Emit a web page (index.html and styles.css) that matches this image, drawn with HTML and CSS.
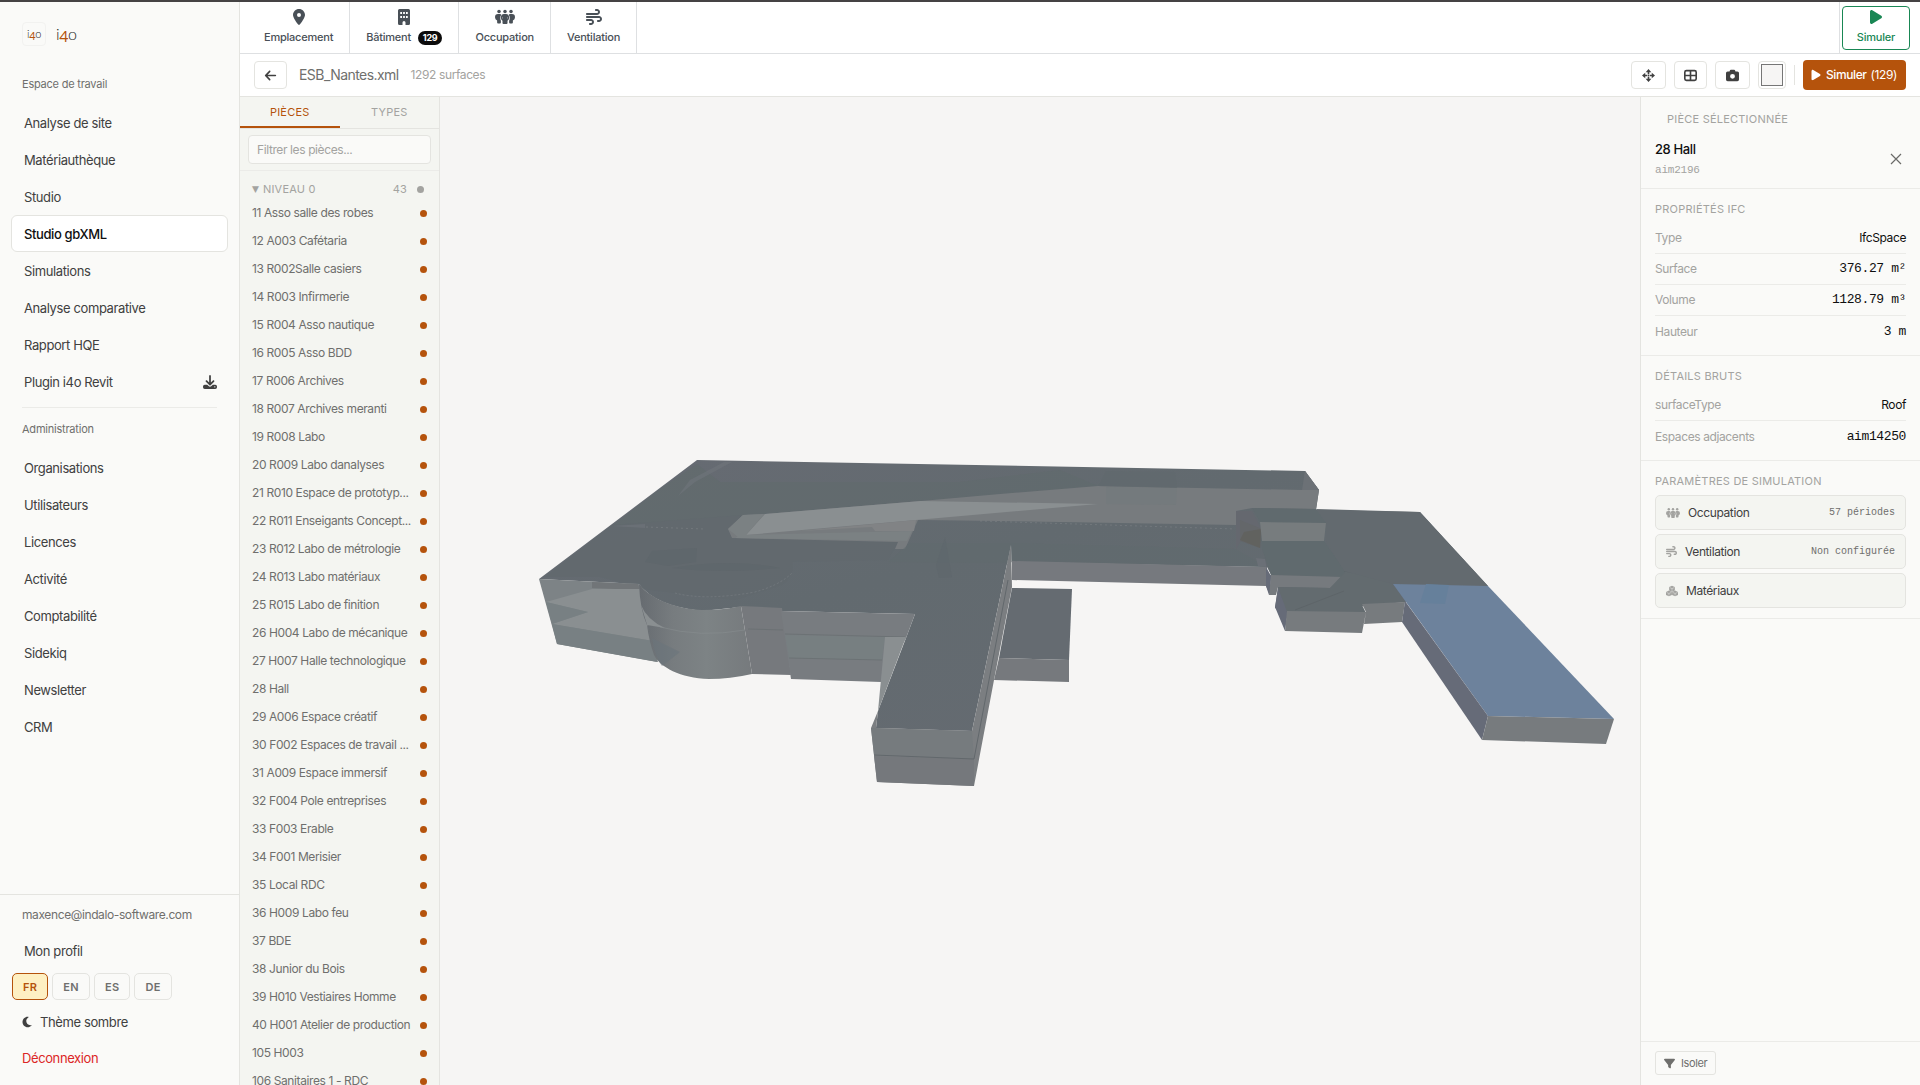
FILE: index.html
```html
<!DOCTYPE html>
<html lang="fr">
<head>
<meta charset="utf-8">
<meta name="viewport" content="width=device-width, initial-scale=1">
<title>Studio gbXML</title>
<link rel="stylesheet" href="styles.css">
</head>
<body>
<svg class="sprite" aria-hidden="true">
  <symbol id="pin" viewBox="0 0 384 512"><path d="M215.700 499.200C267 435 384 279.400 384 192C384 86 298 0 192 0S0 86 0 192c0 87.400 117 243 168.300 307.200c12.300 15.300 35.100 15.300 47.400 0zM192 128a64 64 0 1 1 0 128 64 64 0 1 1 0-128z"/></symbol>
  <symbol id="building" viewBox="0 0 384 512"><path fill-rule="evenodd" d="M48 0h288a48 48 0 0 1 48 48v416a48 48 0 0 1-48 48h-96v-80a48 48 0 0 0-96 0v80H48a48 48 0 0 1-48-48V48A48 48 0 0 1 48 0zM72 96v64h56V96zm92 0v64h56V96zm92 0v64h56V96zM72 224v64h56v-64zm92 0v64h56v-64zm92 0v64h56v-64z"/></symbol>
  <symbol id="people" viewBox="0 0 640 512"><circle cx="128" cy="80" r="56"/><circle cx="320" cy="80" r="56"/><circle cx="512" cy="80" r="56"/><path d="M96 160h64q26 0 42 22-34 44-34 106 0 46 20 84v60q0 32-30 32H98q-30 0-30-32v-64Q0 330 0 262 0 160 96 160zM544 160h-64q-26 0-42 22 34 44 34 106 0 46-20 84v60q0 32 30 32h60q30 0 30-32v-64q68-38 68-106 0-102-96-102z"/><path d="M288 160h64q100 0 100 122 0 56-52 96v70q0 32-30 32H270q-30 0-30-32v-70q-52-40-52-96 0-122 100-122zm-48 80q-26 38 0 84zm160 0v84q26-46 0-84z" fill-rule="evenodd"/></symbol>
  <symbol id="wind" viewBox="0 0 512 512"><path d="M288 32c0 17.700 14.300 32 32 32h32c17.700 0 32 14.300 32 32s-14.300 32-32 32H32c-17.700 0-32 14.300-32 32s14.300 32 32 32H352c53 0 96-43 96-96s-43-96-96-96H320c-17.700 0-32 14.300-32 32zm64 352c0 17.700 14.300 32 32 32h32c53 0 96-43 96-96s-43-96-96-96H32c-17.700 0-32 14.300-32 32s14.300 32 32 32H416c17.700 0 32 14.300 32 32s-14.300 32-32 32H384c-17.700 0-32 14.300-32 32zM128 512h32c53 0 96-43 96-96s-43-96-96-96H32c-17.700 0-32 14.300-32 32s14.300 32 32 32H160c17.700 0 32 14.300 32 32s-14.300 32-32 32H128c-17.700 0-32 14.300-32 32s14.300 32 32 32z"/></symbol>
  <symbol id="play" viewBox="0 0 384 512"><path d="M73 39c-14.800-9.100-33.400-9.400-48.500-.9S0 62.600 0 80V432c0 17.400 9.400 33.400 24.500 41.900s33.700 8.100 48.500-.9L361 297c14.300-8.700 23-24.200 23-41s-8.700-32.200-23-41L73 39z"/></symbol>
  <symbol id="moon" viewBox="0 0 384 512"><path d="M223.500 32C100 32 0 132.300 0 256S100 480 223.500 480c60.600 0 115.500-24.200 155.800-63.400c5-4.900 6.300-12.500 3.100-18.700s-10.100-9.700-17-8.500c-9.800 1.700-19.800 2.600-30.100 2.600c-96.900 0-175.500-78.800-175.500-176c0-65.800 36-123.100 89.300-153.300c6.100-3.500 9.200-10.500 7.700-17.300s-7.300-11.900-14.300-12.500c-6.300-.5-12.600-.8-19-.8z"/></symbol>
  <symbol id="back" viewBox="0 0 448 512"><path d="M9.400 233.400c-12.500 12.500-12.500 32.800 0 45.300l160 160c12.500 12.500 32.800 12.500 45.300 0s12.500-32.800 0-45.300L109.200 288 416 288c17.700 0 32-14.300 32-32s-14.300-32-32-32l-306.700 0L214.600 118.600c12.500-12.500 12.500-32.800 0-45.300s-32.800-12.500-45.300 0l-160 160z"/></symbol>
  <symbol id="filter" viewBox="0 0 512 512"><path d="M3.900 54.900C10.500 40.900 24.500 32 40 32H472c15.500 0 29.500 8.900 36.100 22.900s4.600 30.500-5.200 42.500L320 320.900V448c0 12.100-6.800 23.200-17.700 28.600s-23.800 4.300-33.500-3l-64-48c-8.100-6-12.800-15.500-12.800-25.600V320.900L9 97.300C-.7 85.400-2.800 68.800 3.900 54.900z"/></symbol>
  <symbol id="download" viewBox="0 0 512 512"><path fill-rule="evenodd" d="M288 32c0-42-64-42-64 0v243l-73-74c-30-30-75 15-46 46l128 128q23 20 46 0l128-128c29-31-16-76-46-46l-73 74zM64 352h90l52 52q50 44 100 0l52-52h90a64 64 0 0 1 64 64v32a64 64 0 0 1-64 64H64a64 64 0 0 1-64-64v-32a64 64 0 0 1 64-64zm368 56a24 24 0 1 0 0 48 24 24 0 0 0 0-48z"/></symbol>
  <symbol id="arrows" viewBox="0 0 16 16"><path d="M8 0l3.500 4H9v2.500H7V4H4.500zM8 16l3.500-4H9V9.500H7V12H4.500zM0 8l4-3.500V7h2.500v2H4v2.500zM16 8l-4-3.500V7H9.500v2H12v2.500zM7.200 7.200h1.600v1.600H7.200z"/></symbol>
  <symbol id="grid" viewBox="0 0 16 16"><path fill="none" stroke="currentColor" stroke-width="2" d="M3 2h10a2 2 0 0 1 2 2v8a2 2 0 0 1-2 2H3a2 2 0 0 1-2-2V4a2 2 0 0 1 2-2zM8 2v12M1 8h14"/></symbol>
  <symbol id="camera" viewBox="0 0 512 512"><path fill-rule="evenodd" d="M149 65l-10 31H64a64 64 0 0 0-64 64v256a64 64 0 0 0 64 64h384a64 64 0 0 0 64-64V160a64 64 0 0 0-64-64h-75l-10-31q-11-33-46-33H195q-35 0-46 33zM256 192a96 96 0 1 1 0 192 96 96 0 0 1 0-192z"/></symbol>
  <symbol id="cubes" viewBox="0 0 16 14"><path d="M8 0l3.800 1.800v4.400L8 8 4.200 6.200V1.800z"/><path d="M3.900 6.300l4 2v4l-4 1.700L0 12.300v-4zM12.100 6.300l3.900 2v4L12.100 14l-4-1.700v-4z"/><path d="M5 2.500L8 3.800l3-1.300M8 3.800v3M.8 9l3.100 1.300L7 9M3.900 10.300V13M9 9l3.100 1.300L15.200 9M12.100 10.300V13" fill="none" stroke="#f4f5f1" stroke-width=".6"/></symbol>
  <symbol id="close" viewBox="0 0 12 12"><path fill="none" stroke="currentColor" stroke-width="1.200" d="M1 1l10 10M11 1L1 11"/></symbol>
</svg>
<div class="app">
  <aside class="sidebar">
    <a class="brand" href="#"><span class="brand-mark">i<b>4</b>o</span><span class="brand-name">i<b>4</b>o</span></a>
    <h2 class="nav-title">Espace de travail</h2>
    <nav class="nav">
      <a href="#">Analyse de site</a>
      <a href="#">Matériauthèque</a>
      <a href="#">Studio</a>
      <a href="#" class="active">Studio gbXML</a>
      <a href="#">Simulations</a>
      <a href="#">Analyse comparative</a>
      <a href="#">Rapport HQE</a>
      <a href="#">Plugin i4o Revit <svg class="ico14"><use href="#download"/></svg></a>
    </nav>
    <h2 class="nav-title second">Administration</h2>
    <nav class="nav">
      <a href="#">Organisations</a>
      <a href="#">Utilisateurs</a>
      <a href="#">Licences</a>
      <a href="#">Activité</a>
      <a href="#">Comptabilité</a>
      <a href="#">Sidekiq</a>
      <a href="#">Newsletter</a>
      <a href="#">CRM</a>
    </nav>
    <div class="account">
      <p class="email">maxence@indalo-software.com</p>
      <a class="profile" href="#">Mon profil</a>
      <div class="langs"><button class="on">FR</button><button>EN</button><button>ES</button><button>DE</button></div>
      <button class="theme"><svg class="ico12"><use href="#moon"/></svg>Thème sombre</button>
      <button class="logout">Déconnexion</button>
    </div>
  </aside>
  <div class="main">
    <header class="ribbon">
      <button><svg class="ico16"><use href="#pin"/></svg><span>Emplacement</span></button>
      <button><svg class="ico16"><use href="#building"/></svg><span>Bâtiment <em>129</em></span></button>
      <button><svg class="ico20"><use href="#people"/></svg><span>Occupation</span></button>
      <button><svg class="ico16"><use href="#wind"/></svg><span>Ventilation</span></button>
      <div class="run"><button><svg class="ico16"><use href="#play"/></svg><span>Simuler</span></button></div>
    </header>
    <div class="toolbar">
      <button class="tool back" aria-label="Retour"><svg class="ico13"><use href="#back"/></svg></button>
      <h1>ESB_Nantes.xml</h1>
      <span class="count">1292 surfaces</span>
      <div class="tools">
        <button class="tool" aria-label="Recentrer"><svg class="ico13"><use href="#arrows"/></svg></button>
        <button class="tool narrow" aria-label="Grille"><svg class="ico13"><use href="#grid"/></svg></button>
        <button class="tool" aria-label="Capture"><svg class="ico13"><use href="#camera"/></svg></button>
        <input class="swatch" type="color" value="#f6f5f4" aria-label="Couleur de fond">
        <i class="sep"></i>
        <button class="simulate"><svg class="ico12"><use href="#play"/></svg>Simuler <span>(129)</span></button>
      </div>
    </div>
    <div class="work">
      <section class="rooms">
        <div class="tabs"><button class="on">PIÈCES</button><button>TYPES</button></div>
        <div class="search"><input type="text" placeholder="Filtrer les pièces..." aria-label="Filtrer les pièces"></div>
        <div class="level"><span class="caret">▼</span><span>NIVEAU 0</span><span class="n">43</span><i></i></div>
        <ul>
          <li><span>11 Asso salle des robes</span></li>
          <li><span>12 A003 Cafétaria</span></li>
          <li><span>13 R002Salle casiers</span></li>
          <li><span>14 R003 Infirmerie</span></li>
          <li><span>15 R004 Asso nautique</span></li>
          <li><span>16 R005 Asso BDD</span></li>
          <li><span>17 R006 Archives</span></li>
          <li><span>18 R007 Archives meranti</span></li>
          <li><span>19 R008 Labo</span></li>
          <li><span>20 R009 Labo danalyses</span></li>
          <li><span>21 R010 Espace de prototyp...</span></li>
          <li><span>22 R011 Enseigants Concept...</span></li>
          <li><span>23 R012 Labo de métrologie</span></li>
          <li><span>24 R013 Labo matériaux</span></li>
          <li><span>25 R015 Labo de finition</span></li>
          <li><span>26 H004 Labo de mécanique</span></li>
          <li><span>27 H007 Halle technologique</span></li>
          <li><span>28 Hall</span></li>
          <li><span>29 A006 Espace créatif</span></li>
          <li><span>30 F002 Espaces de travail ...</span></li>
          <li><span>31 A009 Espace immersif</span></li>
          <li><span>32 F004 Pole entreprises</span></li>
          <li><span>33 F003 Erable</span></li>
          <li><span>34 F001 Merisier</span></li>
          <li><span>35 Local RDC</span></li>
          <li><span>36 H009 Labo feu</span></li>
          <li><span>37 BDE</span></li>
          <li><span>38 Junior du Bois</span></li>
          <li><span>39 H010 Vestiaires Homme</span></li>
          <li><span>40 H001 Atelier de production</span></li>
          <li><span>105 H003</span></li>
          <li><span>106 Sanitaires 1 - RDC</span></li>
        </ul>
      </section>
      <main class="viewer">
        <svg viewBox="440 97 1200 988" role="img" aria-label="Maquette 3D du bâtiment">
          <defs>
            <linearGradient id="drum" x1="0" x2="1"><stop offset="0" stop-color="#666b70"/><stop offset=".3" stop-color="#777c7f"/><stop offset=".6" stop-color="#7d8385"/><stop offset="1" stop-color="#767a7d"/></linearGradient>
            <linearGradient id="roof" x1="0" x2="1" y1="0" y2="1"><stop offset="0" stop-color="#676b73"/><stop offset=".4" stop-color="#626a6f"/><stop offset="1" stop-color="#666b72"/></linearGradient>
          </defs>
          <path fill="url(#roof)" d="M539 579L697 460L1305 471L1319 490L1316 510L1420 512L1488 586L1405 602L1364 606L1285 613L1275 608L1278 588L1267 567L1012 562L1011 545L972 731L876 728L878 711L906 638L915 614L781 611L741 607L702 611Q655 606 639 584z"/>
          <path fill="#616a6d" d="M697 464L660 489L612 526L765 514L870 505L1000 494L1098 486L1060 470L960 482L720 482z" opacity=".6"/>
          <path fill="#61696e" d="M612 525L743 515L728 529L732 538L898 542L888 560L792 562Q795 575 782 585L735 600L650 590L600 577L545 577z" opacity=".8"/>
          <path fill="#575f64" d="M652 551L697 548L696 562L668 566L645 562zM672 568Q730 558 780 568Q720 574 672 568z" opacity=".2"/>
          <path fill="#70747c" d="M611 526L645 524L645 528zM732 462L695 482L678 496L690 480L724 462z" opacity=".6"/>
          <path fill="#777b7e" d="M728 529L743 515L765 514L921 501L1000 494L1098 486L1304 490L1305 471L1319 490L1316 509L1252 508L1236 511L1236 525L1000 521L918 520L905 549L895 549L898 542L732 538z"/>
          <path fill="#6c7176" d="M1302 490L1305 471L1319 490z"/>
          <path fill="#8a8f91" d="M746 535L765 514L921 501L1098 504L916 520z"/>
          <path fill="#818385" d="M800 531L916 520L914 531L875 531L872 527z"/>
          <path fill="#7b8183" d="M740 535L912 531L907 541L735 538zM728 529L743 515L764 514L746 535L738 537z"/>
          <path fill="#616a6d" d="M1106 471L1175 472L1177 488L1098 486z" opacity=".7"/>
          <path fill="#727a7c" d="M1106 487L1177 488L1176 505L1106 504z" opacity=".5"/>
          <path stroke="#82868a" stroke-width="1" stroke-dasharray="2 3" d="M980 521L1235 529M646 527L704 529" opacity=".5"/>
          <path fill="#606a6e" d="M910 543L1010 543L1160 547L1235 549L1267 567L1012 562L1010 563L888 562z" opacity=".6"/>
          <path fill="#5d666b" d="M945 537L952 577L939 578L936 565z" opacity=".5"/>
          <path fill="#7d8386" d="M539 579L640 584L657 662L557 644z"/>
          <path fill="#717578" d="M592 582L638 584L640 590L592 588z"/>
          <path fill="#8a8f91" d="M546 602L592 589L640 589L653 641L552 624L588 612z"/>
          <path fill="#788083" d="M546 602L588 612L552 624zM552 624L653 641L658 662L557 644z"/>
          <path fill="url(#drum)" d="M639 584C652 601 680 609 702 610Q725 610 741 606L752 674Q730 679 709 679C680 678 660 667 654 655Q649 641 647 625Q640 610 639 584z"/>
          <path fill="#8a8f91" d="M641 605Q647 620 665 628L647 625L652 641z"/>
          <path fill="none" stroke="#8a8f91" d="M660 627Q700 638 745 630" opacity=".5"/>
          <path fill="none" stroke="#7b8185" stroke-dasharray="2 2" d="M675 593Q705 601 755 592Q780 585 792 573" opacity=".6"/>
          <path fill="#6a757b" d="M652 638L680 652L662 666Q655 658 652 638z" opacity=".6"/>
          <path fill="#76797d" d="M741 606L782 608L791 675L752 674z"/>
          <path fill="#787c80" d="M781 611L915 614L906 638L881 682L791 679z"/>
          <path fill="#777f81" d="M785 635L885 637L882 660L789 658z"/>
          <path stroke="#696f72" d="M748 629L783 630M785 634L905 637M789 658L882 660" fill="none" opacity=".8"/>
          <path fill="#8a8f91" d="M885 637L906 637L878 711z"/>
          <path fill="#7b7e81" d="M871 728L878 711L876 728L972 731L1011 545L1012 587L994 680L974 786L877 782z"/>
          <path fill="#767b7e" d="M871 728L972 731L974 759L874 755z"/>
          <path fill="#75787c" d="M874 756L974 759L974 786L877 782z"/>
          <path fill="none" stroke="#62686c" d="M874 755L974 759L1008 580"/>
          <path fill="#656b71" d="M1012 588L1072 589L1069 660L999 658z"/>
          <path fill="#76797d" d="M999 658L1069 660L1069 682L994 680z"/>
          <path fill="#76797e" d="M1012 561L1267 567L1266 586L1012 580z"/>
          <path fill="#6b7077" d="M1256 558L1265 559L1268 575L1271 575L1270 595L1266 586L1267 567L1258 566z"/>
          <path fill="#606a6e" d="M1252 508L1316 509L1326 523L1324 541L1345 571L1344 577L1271 575L1262 549L1260 522z"/>
          <path fill="#65686f" d="M1236 511L1252 511L1262 530L1240 542L1236 550z"/>
          <path fill="#64676a" d="M1240 520L1262 529L1260 548L1240 541z"/>
          <path fill="#61625f" d="M1240 540L1244 532L1261 529L1260 548z"/>
          <path fill="#777c7e" d="M1260 522L1326 523L1324 541L1262 541z"/>
          <path fill="#767a7e" d="M1271 575L1344 577L1330 588L1278 587L1276 595L1269 595z"/>
          <path fill="#666b78" d="M1266 567L1271 576L1269 595L1266 586zM1278 588L1288 611L1285 631L1275 607z"/>
          <path fill="#636b6f" d="M1278 587L1330 588L1346 571L1384 571L1405 602L1362 605L1366 613L1287 612z"/>
          <path fill="none" stroke="#575e62" d="M1295 610L1344 591M1344 571L1389 578" opacity=".5"/>
          <path fill="#777b7e" d="M1287 611L1366 612L1362 633L1285 631zM1362 604L1405 602L1402 622L1364 624L1366 612z"/>
          <path fill="#636a6f" d="M1316 509L1420 512L1488 586L1393 584L1344 571L1326 541L1326 523z"/>
          <path fill="#6d829c" d="M1393 584L1488 586L1614 719L1488 716z"/>
          <path fill="#66809b" d="M1426 584L1449 585L1445 604L1420 603z"/>
          <path fill="#666b78" d="M1405 601L1488 716L1482 740L1402 622z"/>
          <path fill="#777b7e" d="M1488 716L1614 719L1606 744L1482 740z"/>
        </svg>
      </main>
      <aside class="details">
        <section class="head">
          <h3 class="indent">PIÈCE SÉLECTIONNÉE</h3>
          <div class="room"><div><strong>28 Hall</strong><code>aim2196</code></div><button aria-label="Fermer"><svg class="ico12"><use href="#close"/></svg></button></div>
        </section>
        <section>
          <h3>PROPRIÉTÉS IFC</h3>
          <dl>
            <div><dt>Type</dt><dd>IfcSpace</dd></div>
            <div><dt>Surface</dt><dd class="mono">376.27 m²</dd></div>
            <div><dt>Volume</dt><dd class="mono">1128.79 m³</dd></div>
            <div><dt>Hauteur</dt><dd class="mono">3 m</dd></div>
          </dl>
        </section>
        <section>
          <h3>DÉTAILS BRUTS</h3>
          <dl>
            <div><dt>surfaceType</dt><dd>Roof</dd></div>
            <div><dt>Espaces adjacents</dt><dd class="mono">aim14250</dd></div>
          </dl>
        </section>
        <section class="params">
          <h3>PARAMÈTRES DE SIMULATION</h3>
          <button><svg class="ico14"><use href="#people"/></svg>Occupation<code>57 périodes</code></button>
          <button><svg class="ico11"><use href="#wind"/></svg>Ventilation<code>Non configurée</code></button>
          <button><svg class="ico12"><use href="#cubes"/></svg>Matériaux</button>
        </section>
        <footer><button><svg class="ico11"><use href="#filter"/></svg>Isoler</button></footer>
      </aside>
    </div>
  </div>
</div>
</body>
</html>
```
FILE: styles.css
```css
:root {
  --paper: #fafaf8;
  --panel: #f4f5f1;
  --line: #e4e4e0;
  --line-soft: #ebebe8;
  --ink: #0f0f0f;
  --text: #404040;
  --muted: #6f6f6d;
  --faint: #a3a3a0;
  --accent: #b5530c;
  --mono: "Liberation Mono", monospace;
}
* { box-sizing: border-box; }
body {
  margin: 0;
  font: 400 13px/20px Inter, sans-serif;
  letter-spacing: -0.03em;
  color: var(--text);
  background: #fff;
}
button, input { font: inherit; letter-spacing: inherit; color: inherit; }
button { background: none; border: 0; padding: 0; }
h1, h2, h3, p, ul, dl, dd { margin: 0; padding: 0; font-weight: 400; }
a { color: inherit; text-decoration: none; }
svg { fill: currentColor; display: block; flex: none; }
.sprite { display: none; }
.ico11 { width: 11px; height: 11px; }
.ico12 { width: 12px; height: 12px; }
.ico13 { width: 13px; height: 13px; }
.ico14 { width: 14px; height: 14px; }
.ico16 { width: 16px; height: 16px; }
.ico20 { width: 20px; height: 16px; }

.app { display: flex; height: 100vh; border-top: 2px solid #454344; overflow: hidden; }

/* Sidebar */
.sidebar {
  flex: none; width: 240px; display: flex; flex-direction: column;
  background: var(--paper); border-right: 1px solid var(--line);
}
.brand { display: flex; align-items: center; gap: 10px; margin: 20px 22px 30px; color: #222; }
.brand b { font-weight: 400; color: var(--accent); position: relative; top: 2px; }
.brand-mark { width: 24px; height: 24px; border: 1px solid #f2f2f0; border-radius: 4px; font: 300 11px/22px Lato, sans-serif; text-align: center; }
.brand-name { font: 300 16px/24px Lato, sans-serif; }
.nav-title { margin: 0 22px; font-size: 11px; line-height: 16px; letter-spacing: -0.02em; color: var(--muted); }
.nav { margin: 12px 11px 0; }
.nav a {
  display: flex; align-items: center; justify-content: space-between;
  height: 37px; padding: 0 10px 0 12px; border: 1px solid transparent; border-radius: 6px;
}
.nav .active { background: #fff; border-color: var(--line); color: var(--ink); font-weight: 500; }
.nav-title.second { margin-top: 7px; padding-top: 13px; border-top: 1px solid var(--line-soft); }
.account { margin-top: auto; padding: 10px 12px; border-top: 1px solid var(--line); display: flex; flex-direction: column; align-items: flex-start; }
.email { font-size: 12px; padding-left: 10px; color: var(--muted); }
.profile { padding-left: 12px; margin: 16px 0 12px; }
.langs { display: flex; gap: 4px; }
.langs button {
  height: 27px; padding: 0 10px; border: 1px solid var(--line); border-radius: 5px;
  font-size: 11px; font-weight: 600; letter-spacing: 0.03em; color: var(--muted);
}
.langs .on { border-color: var(--accent); background: #fef0c3; color: var(--accent); }
.theme { display: flex; align-items: center; gap: 7px; padding-left: 9px; margin: 12px 0 16px; }
.logout { padding-left: 10px; margin-bottom: 7px; color: #dc2626; }

/* Ribbon */
.main { flex: 1; min-width: 0; display: flex; flex-direction: column; }
.ribbon { display: flex; flex: none; height: 52px; padding-left: 8px; border-bottom: 1px solid #dee0e2; color: #495057; font-size: 11px; line-height: 16px; font-weight: 500; letter-spacing: -0.02em; }
.ribbon button { display: flex; flex-direction: column; align-items: center; gap: 4px; padding: 7px 16px 0; border-right: 1px solid #dee0e2; }
.ribbon em { display: inline-block; margin-left: 4px; padding: 0 5px; border-radius: 7px; background: #0b0b0b; color: #fff; font: 700 9px/14px Inter, sans-serif; }
.run { display: flex; margin-left: auto; padding: 4px 10px 3px 2px; border-left: 1px solid #dee0e2; }
.ribbon .run button { border: 1px solid #198754; border-radius: 4px; color: #198754; padding: 2px 14px 0; }

/* Toolbar */
.toolbar { display: flex; flex: none; align-items: center; height: 43px; padding: 0 14px; border-bottom: 1px solid var(--line); }
.tool { display: grid; place-items: center; width: 35px; height: 28px; border: 1px solid var(--line); border-radius: 4px; }
.tool.back, .tool.narrow { width: 33px; }
.toolbar h1 { margin-left: 12px; font-size: 14px; letter-spacing: -0.04em; color: var(--muted); }
.count { margin-left: 12px; font-size: 12px; color: var(--faint); }
.tools { display: flex; align-items: center; gap: 8px; margin-left: auto; }
.swatch { width: 28px; height: 28px; padding: 2px; background: #fff; border: 1px solid var(--line); border-radius: 4px; }
.swatch::-webkit-color-swatch-wrapper { padding: 0; }
.swatch::-webkit-color-swatch { border: 1px solid #767676; border-radius: 0; }
.sep { width: 1px; height: 20px; background: var(--line); }
.simulate { display: flex; align-items: center; gap: 4px; height: 30px; padding: 0 9px 0 7px; border-radius: 4px; background: var(--accent); color: #fff; font-size: 12px; font-weight: 500; }
.simulate span { font-weight: 400; }

/* Workspace */
.work { display: flex; flex: 1; min-height: 0; }
.rooms { flex: none; width: 200px; background: var(--panel); border-right: 1px solid var(--line); overflow: hidden; font-size: 12px; }
.tabs { display: flex; height: 32px; border-bottom: 1px solid var(--line); }
.tabs button { flex: 1; border-bottom: 2px solid transparent; font-size: 11px; letter-spacing: 0.02em; color: var(--faint); }
.tabs .on { color: var(--accent); border-color: var(--accent); }
.search { padding: 6px 8px; border-bottom: 1px solid var(--line-soft); }
.search input { display: block; width: 100%; height: 29px; padding: 0 8px; border: 1px solid var(--line); border-radius: 4px; background: var(--paper); }
.search input::placeholder { color: var(--faint); }
.level { display: flex; align-items: center; gap: 4px; height: 28px; padding: 8px 15px 0 12px; font-size: 11px; letter-spacing: 0.02em; color: var(--faint); }
.level .caret { font: 9px/20px "DejaVu Sans", sans-serif; letter-spacing: 0; }
.level .n { margin-left: auto; }
.level i { width: 7px; height: 7px; margin-left: 6px; border-radius: 50%; background: currentColor; }
.rooms ul { list-style: none; color: var(--muted); }
.rooms li { display: flex; align-items: center; gap: 4px; height: 28px; padding: 0 12px; }
.rooms li span { flex: 1; min-width: 0; white-space: nowrap; }
.rooms li::after { content: ""; width: 7px; height: 7px; border-radius: 50%; background: var(--accent); }
.viewer { flex: 1; min-width: 0; background: #f6f5f4; }
.viewer svg { width: 100%; height: 100%; }

/* Details */
.details { flex: none; width: 280px; display: flex; flex-direction: column; background: var(--paper); border-left: 1px solid var(--line); font-size: 12px; }
.details section { padding: 11px 14px 8px; border-bottom: 1px solid var(--line-soft); }
.details h3 { font-size: 11px; line-height: 18px; letter-spacing: 0.02em; color: var(--faint); }
.details .head { padding-top: 13px; }
.indent { padding-left: 12px; }
.room { display: flex; align-items: center; justify-content: space-between; padding-top: 10px; }
.room strong { display: block; font-size: 13px; line-height: 22px; font-weight: 500; color: var(--ink); }
.room button { padding: 4px; color: #6a6a68; }
code { font: 11px/20px var(--mono); letter-spacing: -0.02em; color: var(--faint); display: block; }
dl { padding-top: 5px; }
dl div { display: flex; justify-content: space-between; height: 31px; align-items: center; border-bottom: 1px solid var(--line-soft); }
dl div:last-child { border-bottom: 0; }
dt { color: var(--faint); }
dd { color: var(--ink); }
dd.mono { font: 13px/20px var(--mono); }
.details .params { display: grid; gap: 4px; padding-bottom: 10px; }
.params h3 { padding-bottom: 1px; }
.params button { display: flex; align-items: center; gap: 8px; height: 35px; padding: 0 10px; border: 1px solid var(--line); border-radius: 5px; background: var(--panel); }
.params svg { color: var(--faint); }
.params code { margin-left: auto; font-size: 10px; letter-spacing: 0; color: var(--muted); }
.details footer { margin-top: auto; padding: 9px 14px 10px; border-top: 1px solid var(--line-soft); }
.details footer button { display: flex; align-items: center; gap: 6px; height: 24px; padding: 0 8px; border: 1px solid var(--line); border-radius: 3px; font-size: 11px; color: var(--muted); }
```
